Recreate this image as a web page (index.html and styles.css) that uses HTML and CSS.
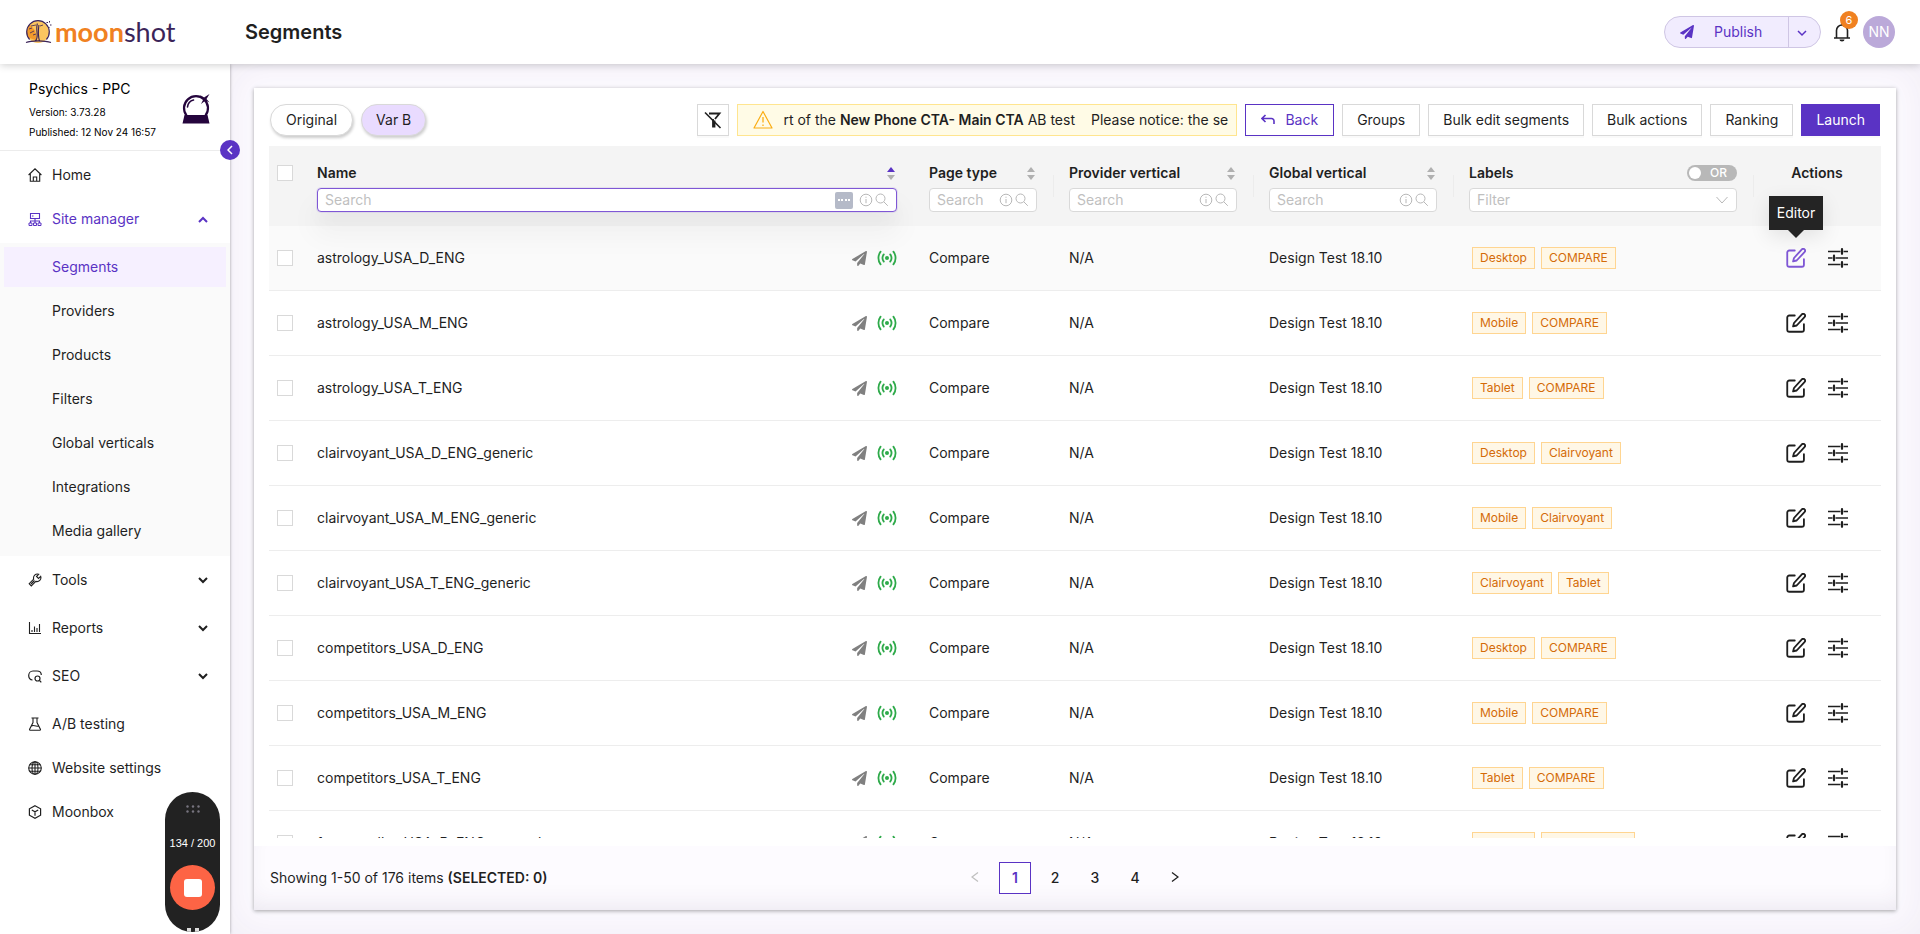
FILE: index.html
```html
<!DOCTYPE html>
<html lang="en">
<head>
    <meta charset="utf-8">
    <title>Segments</title>
    <link rel="stylesheet" href="styles.css">
</head>
<body>
    <!-- shared icons -->
    <svg class="sprite" aria-hidden="true">
        <symbol id="plane" viewBox="0 0 512 512"><path fill="currentColor" d="M476 3.2L12.5 270.6c-18.1 10.4-15.8 35.6 2.2 43.2L121 358.4l287.3-253.2c5.5-4.9 13.3 2.6 8.6 8.3L176 407v80.5c0 23.6 28.5 32.9 42.5 15.8L282 426l124.6 52.2c14.2 6 30.4-2.9 33-18.2l72-432C515 7.8 493.3-6.8 476 3.2z"/></symbol>
        <symbol id="live" viewBox="0 0 20 16"><g fill="none" stroke="currentColor" stroke-width="1.8" stroke-linecap="round"><path d="M3.600 1.600a10.500 10.500 0 0 0 0 12.800M16.400 1.600a10.500 10.500 0 0 1 0 12.800M6.800 4.400a6 6 0 0 0 0 7.200M13.200 4.400a6 6 0 0 1 0 7.200"/></g><circle cx="10" cy="8" r="2" fill="currentColor"/></symbol>
        <symbol id="edit" viewBox="0 0 24 24"><g fill="none" stroke="currentColor" stroke-width="2.2" stroke-linecap="round" stroke-linejoin="round"><path d="M10.500 3H4a2.500 2.500 0 0 0-2.500 2.500V20A2.500 2.500 0 0 0 4 22.500h15a2.500 2.500 0 0 0 2.500-2.500v-6.500"/><path d="M19 1.700a2.200 2.200 0 0 1 3.200 3.200L12.800 15l-4.300 1.100L9.600 12z"/></g></symbol>
        <symbol id="tune" viewBox="0 0 20 20"><path fill="none" stroke="currentColor" stroke-width="1.700" d="M0 3.500h12.500M15.500 3.500H20M0 10h4.500M7.500 10H20M0 16.500h12.500M15.500 16.500H20"/><path fill="none" stroke="currentColor" stroke-width="2.200" stroke-linecap="round" d="M14 1.200v4.600M6 7.700v4.600M14 14.200v4.600"/></symbol>
        <symbol id="search" viewBox="0 0 14 14"><g fill="none" stroke="currentColor"><circle cx="5.500" cy="5.500" r="4.500"/><path d="M8.800 8.800l4 4"/></g></symbol>
        <symbol id="info" viewBox="0 0 14 14"><circle cx="7" cy="7" r="5.800" fill="none" stroke="currentColor"/><path fill="none" stroke="currentColor" d="M7 6v4.200M7 3.700v1.100"/></symbol>
        <symbol id="sort-up" viewBox="0 0 8 5"><path fill="currentColor" d="M4 0l4 5H0z"/></symbol>
        <symbol id="sort-down" viewBox="0 0 8 5"><path fill="currentColor" d="M4 5L0 0h8z"/></symbol>
        <symbol id="chevron" viewBox="0 0 10 7"><path fill="none" stroke="currentColor" stroke-width="2" d="M1 1l4 4 4-4"/></symbol>
    </svg>

    <header class="header">
        <a href="#" class="logo">
            <svg class="logo-moon" viewBox="0 0 28 24" aria-hidden="true">
                <circle cx="13" cy="12" r="11" fill="#fbc55f"/>
                <path d="M5 4.500a11 11 0 0 0-2 13l9 3-2-10z" fill="#f39a2c"/>
                <path d="M4.600 19.500a11.300 11.300 0 1 1 16.800 0" fill="none" stroke="#3b2459" stroke-width="1.200"/>
                <path d="M1 22.500c5-2.200 19-2.200 25 0M10 21c2.500-1.500 2.500-4.500 2-8.500-.4-4-.6-6 .4-9M14.500 21c-1.200-4-1.500-9-.6-16" fill="none" stroke="#3b2459" stroke-width="1.100"/>
                <path d="M4 9l3-1M5 13l4-2M6 6l5-1M8 15l3-1M15 6l3-1" stroke="#3b2459" stroke-width=".8"/>
                <path d="M21.500 2.500h1.500M24.500 1v1.500M25 5h1.500M23.500 7.500h1" stroke="#3b2459" stroke-width="1"/>
            </svg>
            <span class="logo-text"><b>moon</b><span>shot</span></span>
        </a>
        <h1>Segments</h1>
        <div class="header-tools">
            <div class="publish">
                <button type="button" class="publish-main"><svg width="14" height="14"><use href="#plane"/></svg><span>Publish</span></button>
                <button type="button" class="publish-more" aria-label="More"><svg width="10" height="7" viewBox="0 0 10 7"><path d="M1 1l4 4 4-4" fill="none" stroke="currentColor" stroke-width="1.500"/></svg></button>
            </div>
            <button type="button" class="bell" aria-label="Notifications">
                <svg width="18" height="20" viewBox="0 0 18 20"><path d="M1 16h16M3.500 16V8.500a5.500 5.500 0 0 1 11 0V16M9 3V1" fill="none" stroke="currentColor" stroke-width="1.600"/><path d="M6.500 17.500h5a2.500 2 0 0 1-5 0z" fill="currentColor"/></svg>
                <span class="bell-count">6</span>
            </button>
            <span class="avatar">NN</span>
        </div>
    </header>

    <div class="layout">
        <aside class="sidebar">
            <div class="site">
                <div>
                    <div class="site-name">Psychics - PPC</div>
                    <div class="site-meta">Version: 3.73.28</div>
                    <div class="site-meta">Published: 12 Nov 24 16:57</div>
                </div>
                <svg class="site-logo" width="30" height="30" viewBox="0 0 30 30" aria-hidden="true">
                    <path d="M5.500 21.500a12 12 0 1 1 19 0" fill="none" stroke="#25053d" stroke-width="2.200"/>
                    <path d="M3.500 21h23l2 8.500h-27z" fill="#25053d"/>
                    <path d="M6.500 13a8 8 0 0 1 6-7" fill="none" stroke="#25053d" stroke-width="1.600" stroke-linecap="round"/>
                    <path d="M19 1l4 2.500L28.500 0 25.500 5l3 3.500-4-2-4.500 3.500 2.500-5z" fill="#25053d"/>
                </svg>
            </div>
            <nav class="menu">
                <a href="#" class="item"><svg viewBox="0 0 14 14"><path d="M.6 7L7 .8 13.400 7M2.300 6v7.300h9.400V6M5.300 13V9h3.400v4" fill="none" stroke="currentColor" stroke-width="1.100"/></svg>Home</a>
                <a href="#" class="item open"><svg viewBox="0 0 14 14"><path d="M2.500 1.500h9v5h-9zM4 4h1.500M7 6.500v3M2.500 11V9h9v2M7 9v2" fill="none" stroke="currentColor" stroke-width="1.100"/><path d="M1 11h3v2.500H1zM5.500 11h3v2.500h-3zM10 11h3v2.500h-3z" fill="none" stroke="currentColor"/></svg>Site manager<svg class="arrow up"><use href="#chevron"/></svg></a>
                <div class="submenu">
                    <a href="#" class="subitem active">Segments</a>
                    <a href="#" class="subitem">Providers</a>
                    <a href="#" class="subitem">Products</a>
                    <a href="#" class="subitem">Filters</a>
                    <a href="#" class="subitem">Global verticals</a>
                    <a href="#" class="subitem">Integrations</a>
                    <a href="#" class="subitem">Media gallery</a>
                </div>
                <a href="#" class="item group"><svg viewBox="0 0 14 14"><path d="M12.700 3.300l-2.200 2.200-2-2L10.700 1.200a4 4 0 0 0-5 5L1.200 10.700l2.100 2.200 4.500-4.500a4 4 0 0 0 4.900-5.100zM3 11l3.500-3.500" fill="none" stroke="currentColor" stroke-width="1.100"/></svg>Tools<svg class="arrow"><use href="#chevron"/></svg></a>
                <a href="#" class="item group"><svg viewBox="0 0 14 14"><path d="M1.500 1v11.500H13M4 11V9M6.500 11V5.500M9 11V7M11.500 11V3" fill="none" stroke="currentColor" stroke-width="1.100"/></svg>Reports<svg class="arrow"><use href="#chevron"/></svg></a>
                <a href="#" class="item group"><svg viewBox="0 0 14 14"><path d="M4.500 11C2 11 .7 9 .7 6.500S2.500 2 5 2h4c2.500 0 4.300 1.500 4.300 4M11.500 11.500l1.800 1.800" fill="none" stroke="currentColor" stroke-width="1.200"/><circle cx="9.500" cy="9.500" r="2.500" fill="none" stroke="currentColor" stroke-width="1.200"/></svg>SEO<svg class="arrow"><use href="#chevron"/></svg></a>
                <a href="#" class="item"><svg viewBox="0 0 14 14"><path d="M3.500 1h7M5 1v4.500L1.500 12.500q0 .8.800.8h9.400q.8 0 .8-.8L9 5.500V1M3.500 9c2-1.500 4 1 7 0" fill="none" stroke="currentColor" stroke-width="1.100"/></svg>A/B testing</a>
                <a href="#" class="item"><svg viewBox="0 0 14 14"><g fill="none" stroke="currentColor" stroke-width="1.100"><circle cx="7" cy="7" r="6.300"/><ellipse cx="7" cy="7" rx="3" ry="6.300"/><path d="M.7 7h12.600M1.700 3.700h10.600M1.700 10.300h10.600M7 .7v12.600"/></g></svg>Website settings</a>
                <a href="#" class="item"><svg viewBox="0 0 14 14"><path d="M7 .8l5.600 3v6.400L7 13.200l-5.600-3V3.800zM3.800 5L7 6.800 10.200 5M7 6.800v4" fill="none" stroke="currentColor" stroke-width="1.200"/></svg>Moonbox</a>
            </nav>
            <button type="button" class="collapse" aria-label="Collapse menu"><svg width="6" height="10" viewBox="0 0 6 10"><path d="M5 1L1 5l4 4" fill="none" stroke="currentColor" stroke-width="1.500"/></svg></button>
            <div class="recorder">
                <svg width="14" height="8" viewBox="0 0 14 8"><g fill="#77747f"><circle cx="1.500" cy="1.500" r="1.200"/><circle cx="7" cy="1.500" r="1.200"/><circle cx="12.500" cy="1.500" r="1.200"/><circle cx="1.500" cy="6.500" r="1.200"/><circle cx="7" cy="6.500" r="1.200"/><circle cx="12.500" cy="6.500" r="1.200"/></g></svg>
                <span class="recorder-count">134 / 200</span>
                <button type="button" class="stop" aria-label="Stop"></button>
                <span class="pause"></span>
            </div>
        </aside>

        <main class="main">
            <section class="card">
                <div class="toolbar">
                    <button type="button" class="pill">Original</button>
                    <button type="button" class="pill selected">Var B</button>
                    <button type="button" class="btn icon-btn" aria-label="Clear filters"><svg width="18" height="18" viewBox="0 0 18 18"><path d="M5 2.500h10.500L11 8M9 8v7.500h1.500V9.500" fill="none" stroke="currentColor" stroke-width="1.800"/><path d="M1 1.500l15.500 15.500" stroke="currentColor" stroke-width="1.600"/></svg></button>
                    <div class="notice">
                        <svg width="20" height="20" viewBox="0 0 20 20"><path d="M10 1.500l9 16.500H1z" fill="none" stroke="#faad14" stroke-width="1.200" stroke-linejoin="round"/><path d="M10 7v5.500M10 14.500V16" stroke="#faad14" stroke-width="1.300"/></svg>
                        <p>rt of the <b>New Phone CTA- Main CTA</b> AB test <span>Please notice: the se</span></p>
                    </div>
                    <button type="button" class="btn back"><svg width="14" height="12" viewBox="0 0 14 12"><path d="M4.500 1L1 4.500 4.500 8M1 4.500h9.500a2.500 2.500 0 0 1 2.500 2.500v3" fill="none" stroke="currentColor" stroke-width="1.600"/></svg>Back</button>
                    <button type="button" class="btn">Groups</button>
                    <button type="button" class="btn">Bulk edit segments</button>
                    <button type="button" class="btn">Bulk actions</button>
                    <button type="button" class="btn">Ranking</button>
                    <button type="button" class="btn launch">Launch</button>
                </div>

                <div class="table-wrap">
                    <table>
                        <colgroup>
                            <col class="col-check"><col><col class="col-type"><col class="col-vertical"><col class="col-vertical"><col class="col-labels"><col class="col-actions">
                        </colgroup>
                        <thead>
                            <tr>
                                <th class="check"><input type="checkbox" class="box" aria-label="Select all"></th>
                                <th>
                                    <div class="th-top"><label for="searchName">Name</label><span class="sorter asc"><svg><use href="#sort-up"/></svg><svg><use href="#sort-down"/></svg></span></div>
                                    <div class="field focused"><input type="text" id="searchName" placeholder="Search"><span class="keys"></span><svg><use href="#info"/></svg><svg><use href="#search"/></svg></div>
                                </th>
                                <th>
                                    <div class="th-top"><label for="searchType">Page type</label><span class="sorter"><svg><use href="#sort-up"/></svg><svg><use href="#sort-down"/></svg></span></div>
                                    <div class="field"><input type="text" id="searchType" placeholder="Search"><svg><use href="#info"/></svg><svg><use href="#search"/></svg></div>
                                </th>
                                <th class="divided">
                                    <div class="th-top"><label for="searchProvider">Provider vertical</label><span class="sorter"><svg><use href="#sort-up"/></svg><svg><use href="#sort-down"/></svg></span></div>
                                    <div class="field"><input type="text" id="searchProvider" placeholder="Search"><svg><use href="#info"/></svg><svg><use href="#search"/></svg></div>
                                </th>
                                <th class="divided">
                                    <div class="th-top"><label for="searchGlobal">Global vertical</label><span class="sorter"><svg><use href="#sort-up"/></svg><svg><use href="#sort-down"/></svg></span></div>
                                    <div class="field"><input type="text" id="searchGlobal" placeholder="Search"><svg><use href="#info"/></svg><svg><use href="#search"/></svg></div>
                                </th>
                                <th class="divided">
                                    <div class="th-top"><label for="filterLabels">Labels</label><label class="switch"><input type="checkbox"><span>OR</span></label></div>
                                    <div class="field"><select id="filterLabels"><option>Filter</option></select><svg class="down" viewBox="0 0 14 14"><path d="M1.500 4L7 10l5.500-6" fill="none" stroke="currentColor"/></svg></div>
                                </th>
                                <th class="divided actions-head"><div class="th-top">Actions</div></th>
                            </tr>
                        </thead>
                        <tbody id="segments"></tbody>
                    </table>
                </div>

                <footer class="card-footer">
                    <div>Showing 1-50 of 176 items <b>(SELECTED: 0)</b></div>
                    <div class="pages">
                        <button type="button" disabled aria-label="Previous"><svg width="8" height="12" viewBox="0 0 8 12"><path d="M7 1.500L1 6l6 4.500" fill="none" stroke="currentColor" stroke-width="1.200"/></svg></button>
                        <button type="button" class="current">1</button>
                        <button type="button">2</button>
                        <button type="button">3</button>
                        <button type="button">4</button>
                        <button type="button" aria-label="Next"><svg width="8" height="12" viewBox="0 0 8 12"><path d="M1 1.500L7 6l-6 4.500" fill="none" stroke="currentColor" stroke-width="1.300"/></svg></button>
                    </div>
                </footer>
            </section>
        </main>
    </div>
    <script src="script.js"></script>
</body>
</html>
```
FILE: styles.css
```css
* {
    box-sizing: border-box;
}
html, body {
    height: 100%;
}
body {
    margin: 0;
    display: flex;
    flex-direction: column;
    overflow: hidden;
    font-family: Inter, "Liberation Sans", sans-serif;
    font-size: 14px;
    line-height: 22px;
    color: #1f1f1f;
    background: #fff;
}
button, input, select {
    font: inherit;
    color: inherit;
    margin: 0;
}
button {
    cursor: pointer;
    padding: 0;
    border: 0;
    background: none;
}
a {
    color: inherit;
    text-decoration: none;
}
b, th {
    font-weight: 600;
}
.sprite {
    display: none;
}

/* header */
.header {
    flex: none;
    height: 64px;
    display: flex;
    align-items: center;
    padding: 0 25px;
    background: #fff;
    box-shadow: 0 1px 8px rgba(0, 0, 0, 0.2);
    position: relative;
    z-index: 3;
}
.logo {
    width: 220px;
    display: flex;
    align-items: center;
}
.logo-moon {
    width: 28px;
    height: 24px;
}
.logo-text {
    font-family: Lato, sans-serif;
    font-size: 27px;
    line-height: 32px;
    margin-left: 2px;
    color: #3b2459;
}
.logo-text b {
    color: #f08121;
    font-weight: 700;
}
h1 {
    margin: 0;
    font-size: 20px;
    line-height: 28px;
    font-weight: 600;
}
.header-tools {
    margin-left: auto;
    display: flex;
    align-items: center;
}
.publish {
    display: flex;
    height: 32px;
    color: #5a33c4;
    background: #f1ecfe;
    border: 1px solid #cfc6e4;
    border-radius: 16px;
}
.publish-main {
    width: 123px;
    display: flex;
    align-items: center;
    gap: 20px;
    padding-left: 15px;
}
.publish-more {
    width: 32px;
    padding-right: 6px;
    border-left: 1px solid #cfc6e4;
}
.bell {
    position: relative;
    width: 18px;
    height: 20px;
    margin: 0 12px;
}
.bell svg {
    display: block;
}
.bell-count {
    position: absolute;
    left: 7px;
    top: -11px;
    width: 18px;
    height: 18px;
    border-radius: 9px;
    background: #f08121;
    color: #fff;
    font-size: 11px;
    line-height: 18px;
    text-align: center;
}
.avatar {
    width: 32px;
    height: 32px;
    border-radius: 16px;
    background: #bba9d9;
    color: #fff;
    line-height: 32px;
    text-align: center;
}

/* sidebar */
.layout {
    flex: 1;
    min-height: 0;
    display: flex;
}
.sidebar {
    flex: none;
    width: 230px;
    position: relative;
    z-index: 2;
    background: #fff;
    box-shadow: 0 0 3px rgba(0, 0, 0, 0.35);
}
.site {
    display: flex;
    justify-content: space-between;
    align-items: center;
    padding: 12px 19px 8px 29px;
    border-bottom: 1px solid #ececec;
    color: #000;
}
.site-name {
    line-height: 26px;
}
.site-meta {
    font-size: 10px;
    line-height: 20px;
}
.menu {
    padding-top: 4px;
}
.item, .subitem {
    display: flex;
    align-items: center;
    height: 40px;
    margin: 0 4px 4px;
    padding: 0 18px 0 24px;
}
.item svg {
    width: 14px;
    height: 14px;
    margin-right: 10px;
}
.item .arrow {
    width: 10px;
    height: 7px;
    margin: 0 0 0 auto;
}
.item .up {
    transform: rotate(180deg);
}
.group {
    margin-bottom: 8px;
}
.open, .subitem.active {
    color: #5a33c4;
}
.submenu {
    background: #fafafa;
    padding: 4px 0 1px;
    margin-bottom: 4px;
}
.subitem {
    padding-left: 48px;
}
.subitem.active {
    background: #f6f0ff;
}
.collapse {
    position: absolute;
    right: -10px;
    top: 76px;
    width: 20px;
    height: 20px;
    border-radius: 10px;
    background: #5a33c4;
    color: #fff;
    display: flex;
    align-items: center;
    justify-content: center;
}
.recorder {
    position: absolute;
    right: 10px;
    bottom: 2px;
    width: 55px;
    height: 140px;
    border-radius: 28px;
    background: #222;
    color: #fff;
    overflow: hidden;
    display: flex;
    flex-direction: column;
    align-items: center;
    padding-top: 13px;
}
.recorder svg {
    flex: none;
}
.recorder-count {
    font-family: "Liberation Sans", sans-serif;
    font-size: 11px;
    line-height: 16px;
    margin: 22px 0 14px;
    white-space: nowrap;
}
.stop {
    flex: none;
    width: 45px;
    height: 45px;
    border-radius: 23px;
    background: #fd6445;
    display: flex;
    align-items: center;
    justify-content: center;
}
.stop::before {
    content: "";
    width: 18px;
    height: 18px;
    border-radius: 3px;
    background: #fff;
}
.pause {
    flex: none;
    width: 12px;
    height: 14px;
    margin-top: 18px;
    border: solid #ddd;
    border-width: 0 4px;
}

/* content */
.main {
    flex: 1;
    min-width: 0;
    padding: 24px;
    display: flex;
    background: #fcfaff;
    box-shadow: inset 0 0 40px rgba(60, 40, 90, 0.06);
}
.card {
    flex: 1;
    min-width: 0;
    display: flex;
    flex-direction: column;
    background: #fff;
    box-shadow: 0 1px 4px rgba(0, 0, 0, 0.35);
}
.toolbar {
    display: flex;
    gap: 8px;
    padding: 16px 16px 10px;
}
.pill {
    height: 32px;
    padding: 0 15px;
    border: 1px solid #d9d9d9;
    border-radius: 16px;
    background: #fff;
    box-shadow: 1px 2px 3px rgba(0, 0, 0, 0.2);
}
.pill.selected {
    padding: 0 14px;
    background: #e9dbff;
}
.btn {
    flex: none;
    height: 32px;
    padding: 0 14px;
    border: 1px solid #d9d9d9;
    background: #fff;
    box-shadow: 0 2px 0 rgba(0, 0, 0, 0.02);
    white-space: nowrap;
}
.icon-btn {
    width: 32px;
    padding: 0;
    margin-left: auto;
    display: flex;
    align-items: center;
    justify-content: center;
}
.back {
    display: flex;
    align-items: center;
    gap: 10px;
    padding: 0 15px;
    color: #5a33c4;
    border-color: #5a33c4;
}
.launch {
    background: #5a33c4;
    border-color: #5a33c4;
    color: #fff;
}
.notice {
    flex: none;
    width: 500px;
    height: 32px;
    display: flex;
    align-items: center;
    gap: 10px;
    padding: 0 2px 0 15px;
    border: 1px solid #ffe58f;
    background: #fffbe6;
}
.notice svg {
    flex: none;
}
.notice p {
    margin: 0;
    flex: 1;
    overflow: hidden;
    white-space: nowrap;
}
.notice span {
    margin-left: 12px;
}

/* table */
.table-wrap {
    flex: 1;
    min-height: 0;
    overflow: hidden;
    margin: 0 15px 8px;
}
table {
    width: 100%;
    table-layout: fixed;
    border-collapse: separate;
    border-spacing: 0;
}
.col-check { width: 32px; }
.col-type { width: 140px; }
.col-vertical { width: 200px; }
.col-labels { width: 300px; }
.col-actions { width: 128px; }
th {
    height: 80px;
    padding: 16px 16px 0;
    background: #f4f4f4;
    text-align: left;
    vertical-align: top;
    position: relative;
}
.divided::before {
    content: "";
    position: absolute;
    left: 0;
    top: 29px;
    height: 22px;
    border-left: 1px solid #ececec;
}
td {
    height: 65px;
    padding: 0 16px;
    border-bottom: 1px solid #ededed;
    white-space: nowrap;
}
.hovered td {
    background: #fafafa;
}
th.check, td.check {
    padding-left: 8px;
    padding-right: 8px;
}
th.check {
    padding-top: 19px;
}
.box {
    appearance: none;
    display: block;
    width: 16px;
    height: 16px;
    border: 1px solid #d9d9d9;
    background: #fff;
}
.th-top {
    display: flex;
    align-items: center;
    justify-content: space-between;
    height: 22px;
    margin-bottom: 4px;
}
.sorter {
    display: flex;
    flex-direction: column;
    gap: 3px;
    margin-right: 2px;
    color: #b0b0b0;
}
.sorter svg {
    display: block;
    width: 8px;
    height: 5px;
}
.asc svg:first-child {
    color: #5a33c4;
}
.field {
    position: relative;
    display: flex;
    align-items: center;
    gap: 2px;
    height: 24px;
    padding: 0 7px;
    border: 1px solid #d9d9d9;
    border-radius: 4px;
    background: #fff;
    color: #b8b8b8;
    font-weight: 400;
}
.field.focused {
    border-color: #7f57d5;
    box-shadow: 0 0 0 1px rgba(127, 87, 213, 0.12), 0 12px 16px rgba(0, 0, 0, 0.02), 0 20px 28px 4px rgba(0, 0, 0, 0.04);
}
.field input, .field select {
    flex: 1;
    min-width: 0;
    height: 22px;
    padding: 0;
    border: 0;
    outline: 0;
    background: transparent;
    appearance: none;
}
.field input::placeholder {
    color: #bfbfbf;
    opacity: 1;
}
.field select {
    color: #bfbfbf;
}
.field svg {
    flex: none;
    width: 14px;
    height: 14px;
}
.keys {
    width: 18px;
    height: 17px;
    margin-right: 4px;
    border-radius: 2px;
    background: #b5bac8;
    display: flex;
    align-items: center;
    justify-content: center;
}
.keys::before {
    content: "";
    width: 12px;
    height: 0;
    border-top: 2px dotted #fff;
}
.switch {
    position: relative;
    width: 50px;
    height: 16px;
    border-radius: 8px;
    background: #b8b8b8;
    color: #fff;
    font-size: 12px;
    line-height: 16px;
    font-weight: 500;
    padding-left: 23px;
}
.switch input {
    appearance: none;
    position: absolute;
    left: 2px;
    top: 2px;
    width: 12px;
    height: 12px;
    border-radius: 6px;
    background: #fff;
}
.actions-head .th-top {
    justify-content: center;
}
.name {
    display: flex;
    align-items: center;
    gap: 10px;
}
.name .plane {
    width: 15px;
    height: 15px;
    margin-left: auto;
    color: #808080;
}
.name .live {
    width: 20px;
    height: 16px;
    color: #2eaa4a;
}
.tags {
    display: flex;
    gap: 6px;
    padding-left: 3px;
}
.tag {
    height: 22px;
    padding: 0 7px;
    border: 1px solid #ffd591;
    background: #fff7e6;
    color: #d46b08;
    font-size: 12px;
    line-height: 20px;
}
.actions {
    display: flex;
    justify-content: center;
    gap: 22px;
}
.actions button {
    position: relative;
}
.actions svg {
    display: block;
    width: 20px;
    height: 20px;
}
.hovered .edit {
    color: #7f57d5;
}
.tooltip {
    position: absolute;
    left: -17px;
    top: -52px;
    width: 54px;
    padding: 6px 0;
    background: #242424;
    color: #fff;
    text-align: center;
    box-shadow: 0 6px 20px rgba(0, 0, 0, 0.1);
}
.tooltip::after {
    content: "";
    position: absolute;
    left: 19px;
    top: 100%;
    border: 8px solid transparent;
    border-top-color: #242424;
    border-bottom: 0;
}

/* footer */
.card-footer {
    flex: none;
    height: 64px;
    padding: 0 16px;
    display: grid;
    grid-template-columns: 1fr auto 1fr;
    align-items: center;
    background: #fdfbff;
    box-shadow: inset 0 -14px 28px -14px rgba(60, 40, 90, 0.12);
}
.pages {
    display: flex;
    gap: 8px;
}
.pages button {
    width: 32px;
    height: 32px;
    font-weight: 500;
}
.pages .current {
    border: 1px solid #5a33c4;
    background: #fff;
    color: #5a33c4;
    font-weight: 600;
}
.pages button:disabled {
    color: #bfbfbf;
}
```
FILE: script.js
```js
const segments = [
    ["astrology_USA_D_ENG", ["Desktop", "COMPARE"]],
    ["astrology_USA_M_ENG", ["Mobile", "COMPARE"]],
    ["astrology_USA_T_ENG", ["Tablet", "COMPARE"]],
    ["clairvoyant_USA_D_ENG_generic", ["Desktop", "Clairvoyant"]],
    ["clairvoyant_USA_M_ENG_generic", ["Mobile", "Clairvoyant"]],
    ["clairvoyant_USA_T_ENG_generic", ["Clairvoyant", "Tablet"]],
    ["competitors_USA_D_ENG", ["Desktop", "COMPARE"]],
    ["competitors_USA_M_ENG", ["Mobile", "COMPARE"]],
    ["competitors_USA_T_ENG", ["Tablet", "COMPARE"]],
    ["fortuneteller_USA_D_ENG_general", ["Desktop", "Fortune Teller"]]
];

document.getElementById("segments").innerHTML = segments.map(([name, labels], i) => `
    <tr class="${i === 0 ? "hovered" : ""}">
        <td class="check"><input type="checkbox" class="box" aria-label="Select ${name}"></td>
        <td><div class="name">${name}<svg class="plane"><use href="#plane"/></svg><svg class="live"><use href="#live"/></svg></div></td>
        <td>Compare</td>
        <td>N/A</td>
        <td>Design Test 18.10</td>
        <td><div class="tags">${labels.map(label => `<span class="tag">${label}</span>`).join("")}</div></td>
        <td><div class="actions">
            <button type="button" class="edit" aria-label="Editor"><svg><use href="#edit"/></svg>${i === 0 ? '<span class="tooltip">Editor</span>' : ""}</button>
            <button type="button" aria-label="Settings"><svg><use href="#tune"/></svg></button>
        </div></td>
    </tr>`).join("");
```
